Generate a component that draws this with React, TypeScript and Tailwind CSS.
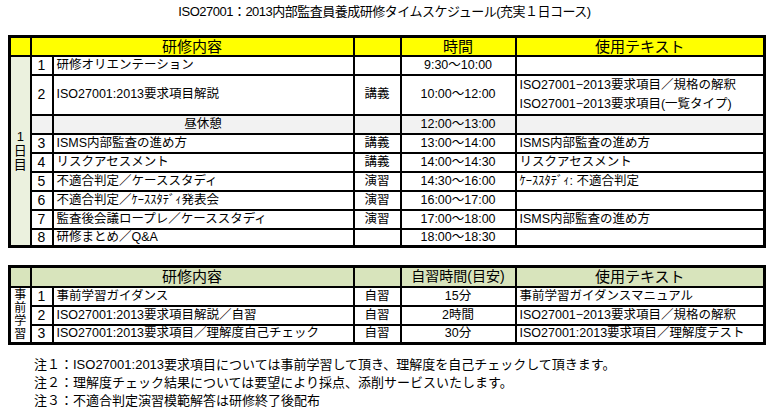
import React from "react";

const font = { fontFamily: '"Liberation Sans", "Noto Sans CJK JP", sans-serif' };

type Row = { no: string; title: string; kind: string; time: string; text: string[] };

const dayRows: Row[] = [
  { no: "3", title: "ISMS内部監査の進め方", kind: "講義", time: "13:00～14:00", text: ["ISMS内部監査の進め方"] },
  { no: "4", title: "リスクアセスメント", kind: "講義", time: "14:00～14:30", text: ["リスクアセスメント"] },
  { no: "5", title: "不適合判定／ケーススタディ", kind: "演習", time: "14:30～16:00", text: ["ｹｰｽｽﾀﾃﾞｨ: 不適合判定"] },
  { no: "6", title: "不適合判定／ｹｰｽｽﾀﾃﾞｨ発表会", kind: "演習", time: "16:00～17:00", text: [] },
  { no: "7", title: "監査後会議ロープレ／ケーススタディ", kind: "演習", time: "17:00～18:00", text: ["ISMS内部監査の進め方"] },
  { no: "8", title: "研修まとめ／Q&A", kind: "", time: "18:00～18:30", text: [] },
];

const selfRows: Row[] = [
  { no: "1", title: "事前学習ガイダンス", kind: "自習", time: "15分", text: ["事前学習ガイダンスマニュアル"] },
  { no: "2", title: "ISO27001:2013要求項目解説／自習", kind: "自習", time: "2時間", text: ["ISO27001−2013要求項目／規格の解釈"] },
  { no: "3", title: "ISO27001:2013要求項目／理解度自己チェック", kind: "自習", time: "30分", text: ["ISO27001:2013要求項目／理解度テスト"] },
];

const td = "border-2 border-black p-0 leading-[15px]";
const num = `${td} text-center text-[14px]`;

function Cols() {
  return (
    <colgroup>
      <col className="w-[21px]" />
      <col className="w-[22px]" />
      <col className="w-[301px]" />
      <col className="w-[47px]" />
      <col className="w-[115px]" />
      <col className="w-[249px]" />
    </colgroup>
  );
}

function BodyRow({ r, first, h = "h-[19px]" }: { r: Row; first?: React.ReactNode; h?: string }) {
  return (
    <tr className={h}>
      {first}
      <td className={num}>{r.no}</td>
      <td className={`${td} pl-[3px] whitespace-nowrap`}>{r.title}</td>
      <td className={`${td} text-center`}>{r.kind}</td>
      <td className={`${td} text-center`}>{r.time}</td>
      <td className={`${td} pl-[3px] whitespace-nowrap`}>{r.text[0]}</td>
    </tr>
  );
}

export default function App() {
  return (
    <div className="w-[769px] h-[417px] bg-white text-black text-[12.5px] overflow-hidden" style={font}>
      <h1 className="text-center text-[13px] leading-[18px] pt-[3px] tracking-[-0.5px]">
        ISO27001：2013内部監査員養成研修タイムスケジュール(充実１日コース)
      </h1>

      <table className="ml-[8px] mt-[14px] w-[755px] table-fixed border-collapse border-[3px] border-black">
        <Cols />
        <tbody>
          <tr className="h-[19px] bg-[#ffff00] text-[15px]">
            <td className={td}></td>
            <td className={`${td} text-center`} colSpan={2}>研修内容</td>
            <td className={td}></td>
            <td className={`${td} text-center`}>時間</td>
            <td className={`${td} text-center`}>使用テキスト</td>
          </tr>
          <tr className="h-[19px]">
            <td className={`${td} bg-[#ebf1de] text-center align-middle`} rowSpan={9}>
              <div className="flex flex-col items-center leading-[14px] text-[13px]">
                <span>1</span>
                <span>日</span>
                <span>目</span>
              </div>
            </td>
            <td className={num}>1</td>
            <td className={`${td} pl-[3px]`}>研修オリエンテーション</td>
            <td className={td}></td>
            <td className={`${td} text-center`}>9:30～10:00</td>
            <td className={td}></td>
          </tr>
          <tr className="h-[37px]">
            <td className={num}>2</td>
            <td className={`${td} pl-[3px]`}>ISO27001:2013要求項目解説</td>
            <td className={`${td} text-center`}>講義</td>
            <td className={`${td} text-center`}>10:00～12:00</td>
            <td className={`${td} pl-[3px] whitespace-nowrap leading-[19px]`}>
              <div>ISO27001−2013要求項目／規格の解釈</div>
              <div>ISO27001−2013要求項目(一覧タイプ)</div>
            </td>
          </tr>
          <tr className="h-[19px] bg-[#f2f2f2]">
            <td className={td}></td>
            <td className={`${td} text-center`}>昼休憩</td>
            <td className={td}></td>
            <td className={`${td} text-center`}>12:00～13:00</td>
            <td className={td}></td>
          </tr>
          {dayRows.map((r) => (
            <BodyRow key={r.no} r={r} h={r.no === "8" ? "h-[18px]" : "h-[19px]"} />
          ))}
        </tbody>
      </table>

      <table className="ml-[8px] mt-[17px] w-[755px] table-fixed border-collapse border-[3px] border-black">
        <Cols />
        <tbody>
          <tr className="h-[20px] bg-[#d8e4bc] text-[15px]">
            <td className={td}></td>
            <td className={`${td} text-center`} colSpan={2}>研修内容</td>
            <td className={td}></td>
            <td className={`${td} text-center text-[14px]`}>自習時間(目安)</td>
            <td className={`${td} text-center`}>使用テキスト</td>
          </tr>
          {selfRows.map((r, i) => (
            <BodyRow
              key={r.no}
              r={r}
              first={
                i === 0 ? (
                  <td className={`${td} text-center align-middle`} rowSpan={3}>
                    <div className="flex flex-col items-center text-[12px] leading-[13px]">
                      <span>事</span>
                      <span>前</span>
                      <span>学</span>
                      <span>習</span>
                    </div>
                  </td>
                ) : undefined
              }
            />
          ))}
        </tbody>
      </table>

      <div className="ml-[34px] mt-[11px] text-[13px] leading-[18px]">
        <p>注１：ISO27001:2013要求項目については事前学習して頂き、理解度を自己チェックして頂きます。</p>
        <p>注２：理解度チェック結果については要望により採点、添削サービスいたします。</p>
        <p>注３：不適合判定演習模範解答は研修終了後配布</p>
      </div>
    </div>
  );
}
